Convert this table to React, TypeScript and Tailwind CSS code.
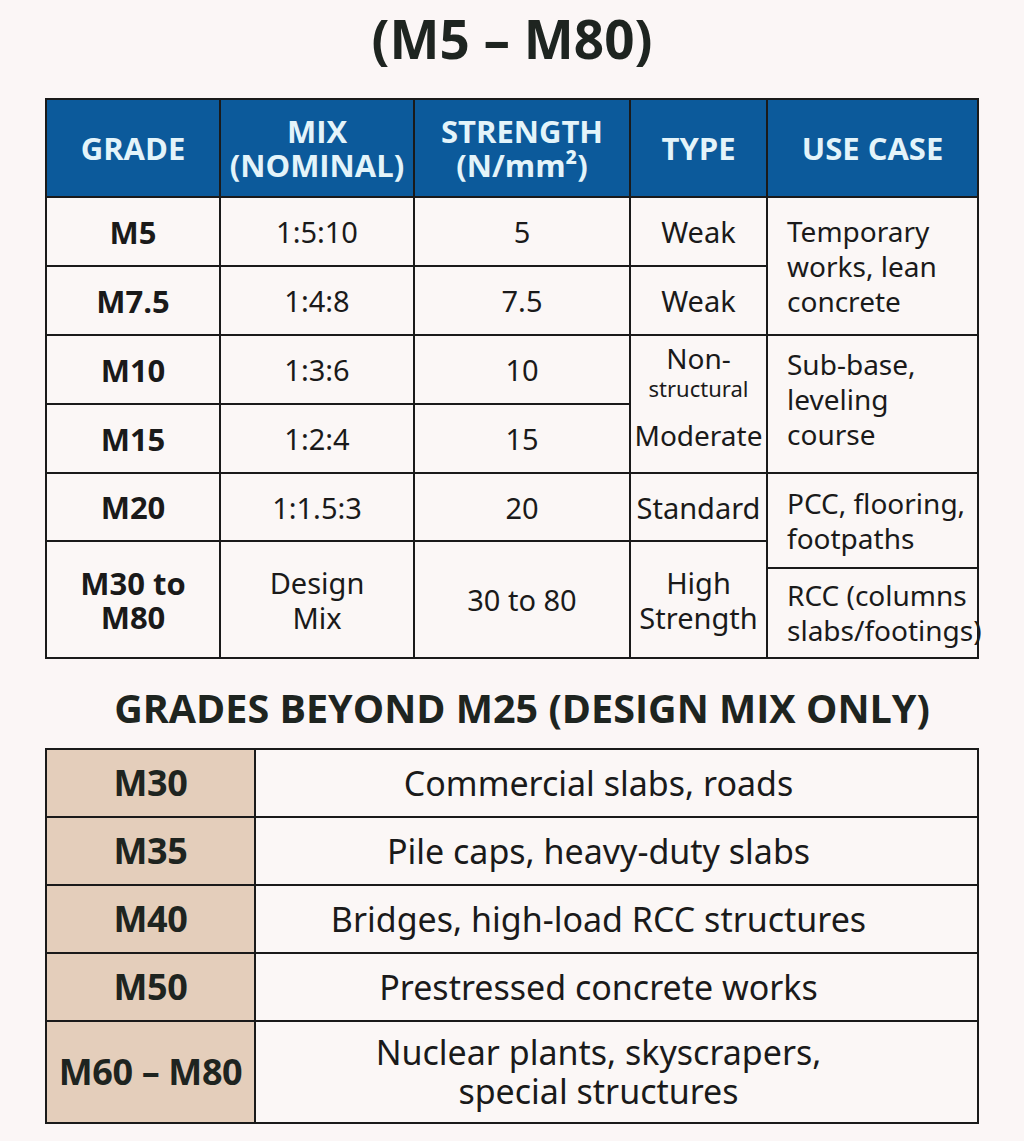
import React from 'react';

const head = "bg-[#0c5a9b] text-[#e4f4fa] font-bold text-[31px] leading-[34px] flex flex-col items-center justify-center text-center";
const cell = "bg-[#fbf7f6] text-[#1a1a1a] flex flex-col items-center justify-center text-center";
const grade = `${cell} font-bold text-[31px] leading-[34px] font-['Open_Sans',sans-serif]`;
const plain = `${cell} text-[29px] leading-[35px] font-['Noto_Sans',sans-serif]`;
const useCase = "bg-[#fbf7f6] text-[#1a1a1a] flex flex-col justify-center pl-[19px] text-[28px] leading-[35px] font-['Noto_Sans',sans-serif] whitespace-nowrap";

const lowerRows = [
  { grade: 'M30', use: ['Commercial slabs, roads'] },
  { grade: 'M35', use: ['Pile caps, heavy-duty slabs'] },
  { grade: 'M40', use: ['Bridges, high-load RCC structures'] },
  { grade: 'M50', use: ['Prestressed concrete works'] },
  { grade: 'M60 – M80', use: ['Nuclear plants, skyscrapers,', 'special structures'] },
];

export default function App() {
  return (
    <div className="min-h-screen w-[1024px] bg-[#fbf6f6] px-[45px] pb-[17px] font-['Open_Sans',sans-serif]">
      {/* title */}
      <h1 className="pt-[7px] text-center text-[53px] font-bold leading-[64px] text-[#1e2420]">
        (M5 – M80)
      </h1>

      {/* nominal mix table */}
      <div className="mt-[27px] grid grid-cols-[172px_192px_214px_135px_209px] grid-rows-[96px_67px_67px_67px_67px_66px_115px] gap-[2px] border-2 border-[#1a1a1a] bg-[#1a1a1a]">
        <div className={head}>GRADE</div>
        <div className={`${head} text-[30px]`}>
          <span>MIX</span>
          <span>(NOMINAL)</span>
        </div>
        <div className={`${head} text-[30px]`}>
          <span>STRENGTH</span>
          <span>(N/mm²)</span>
        </div>
        <div className={head}>TYPE</div>
        <div className={head}>USE CASE</div>

        <div className={grade}>M5</div>
        <div className={plain}>1:5:10</div>
        <div className={plain}>5</div>
        <div className={plain}>Weak</div>
        <div className={`${useCase} row-span-2`}>
          <span>Temporary</span>
          <span>works, lean</span>
          <span>concrete</span>
        </div>

        <div className={grade}>M7.5</div>
        <div className={plain}>1:4:8</div>
        <div className={plain}>7.5</div>
        <div className={plain}>Weak</div>

        <div className={grade}>M10</div>
        <div className={plain}>1:3:6</div>
        <div className={plain}>10</div>
        <div className="row-span-2 flex flex-col items-center bg-[#fbf7f6] pt-[6px] text-center font-['Noto_Sans',sans-serif] text-[#1a1a1a]">
          <span className="text-[28px] leading-[33px]">Non-</span>
          <span className="text-[22px] leading-[27px]">structural</span>
          <span className="mt-[16px] text-[28px] leading-[34px]">Moderate</span>
        </div>
        <div className={`${useCase} row-span-2 pb-[10px]`}>
          <span>Sub-base,</span>
          <span>leveling</span>
          <span>course</span>
        </div>

        <div className={grade}>M15</div>
        <div className={plain}>1:2:4</div>
        <div className={plain}>15</div>

        <div className={grade}>M20</div>
        <div className={plain}>1:1.5:3</div>
        <div className={plain}>20</div>
        <div className={`${plain} text-[28px]`}>Standard</div>
        <div className="row-span-2 flex flex-col gap-[2px] bg-[#1a1a1a]">
          <div className={`${useCase} h-[93px]`}>
            <span>PCC, flooring,</span>
            <span>footpaths</span>
          </div>
          <div className={`${useCase} flex-1`}>
            <span>RCC (columns</span>
            <span>slabs/footings)</span>
          </div>
        </div>

        <div className={grade}>
          <span>M30 to</span>
          <span>M80</span>
        </div>
        <div className={plain}>
          <span>Design</span>
          <span>Mix</span>
        </div>
        <div className={plain}>30 to 80</div>
        <div className={`${plain} text-[28px] leading-[34px]`}>
          <span>High</span>
          <span>Strength</span>
        </div>
      </div>

      {/* design mix section */}
      <h2 className="mt-[25px] pl-[20px] text-center text-[39.5px] font-bold leading-[48px] text-[#1e2420]">
        GRADES BEYOND M25 (DESIGN MIX ONLY)
      </h2>

      <div className="mt-[16px] grid grid-cols-[207px_721px] grid-rows-[66px_66px_66px_66px_100px] gap-[2px] border-2 border-[#1a1a1a] bg-[#1a1a1a]">
        {lowerRows.map((row) => (
          <React.Fragment key={row.grade}>
            <div className="flex items-center justify-center whitespace-nowrap bg-[#e4cebb] text-[36px] font-bold tracking-[-0.01em] text-[#1e2420]">
              {row.grade}
            </div>
            <div className="flex flex-col items-center justify-center bg-[#fbf7f6] pr-[36px] text-center font-['Noto_Sans',sans-serif] text-[34px] leading-[39px] text-[#1a1a1a]">
              {row.use.map((line) => (
                <span key={line}>{line}</span>
              ))}
            </div>
          </React.Fragment>
        ))}
      </div>
    </div>
  );
}
